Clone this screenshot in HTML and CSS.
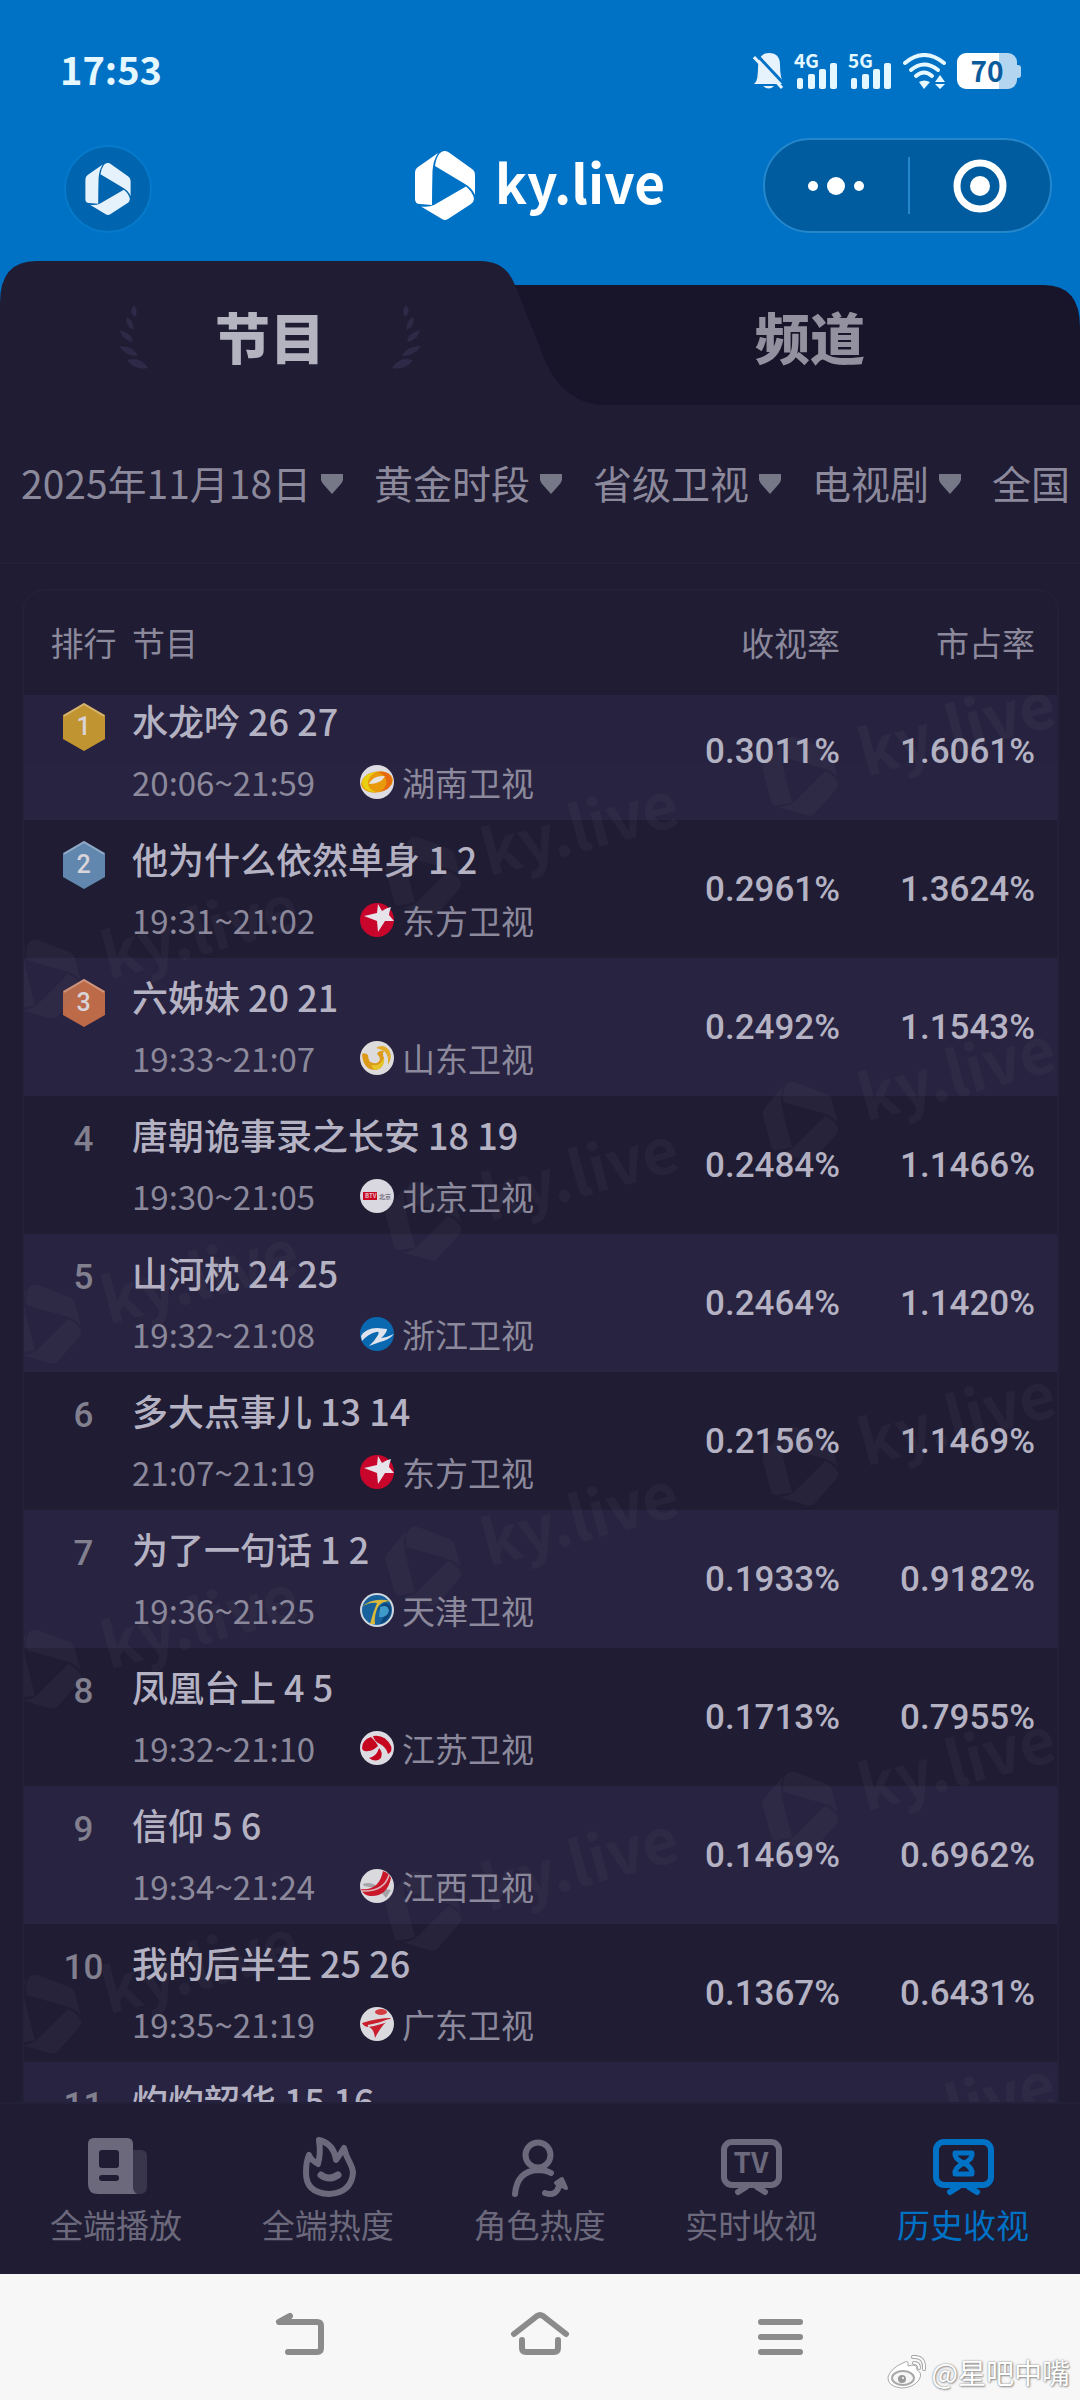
FILE: index.html
```html
<!DOCTYPE html>
<html lang="zh-CN">
<head>
<meta charset="utf-8">
<meta name="viewport" content="width=device-width, initial-scale=1">
<title>ky.live</title>
<link rel="stylesheet" href="styles.css">
</head>
<body>
<svg class="defs" aria-hidden="true">
  <symbol id="logo" viewBox="0 0 60 69">
    <path d="M23 2L3 16Q0 18 0 22V48Q0 53 5 53L17 54Q17 38 17.500 20Q18 10 23 2Z"/>
    <path d="M24.500 2.500Q29 -2 34 1.500L57 18Q60 20 60 24V44Q57 37 50 33L20 15Q21 7 24.500 2.500Z"/>
    <path d="M51 35.500Q58 41 59 48Q58.500 51.500 56 53L33 68Q30 70 27 68L6 55.500Q14 56.500 19 54Z"/>
  </symbol>
  <symbol id="laurel" viewBox="0 0 30 64">
    <path d="M15 0Q9 7 16 12Q20 6 15 0ZM8 12Q5 20 14 25Q16 17 8 12ZM1 25Q3 35 14 37Q13 28 1 25ZM0 41Q6 51 19 51Q15 41 0 41ZM8 55Q16 66 29 63Q22 51 8 55Z"/>
  </symbol>
  <symbol id="arrow" viewBox="0 0 22 20">
    <path d="M0 0H22V6Q21 9 19 11L11 20L3 11Q1 9 0 6Z"/>
  </symbol>
  <symbol id="hex" viewBox="0 0 44 50">
    <path d="M22 1L43 13V37L22 49L1 37V13Z" fill="currentColor"/>
    <path d="M2 14L22 2L42 14" fill="none" stroke="#fff" stroke-opacity=".3" stroke-width="2"/>
  </symbol>
  <symbol id="bars" viewBox="0 0 42 26">
    <rect x="1" y="15" width="6" height="11" rx="2"/><rect x="12" y="11" width="7" height="15" rx="2"/><rect x="23" y="6" width="7" height="20" rx="2"/><rect x="34" y="0" width="7" height="26" rx="2"/>
  </symbol>
  <symbol id="ch-hunan" viewBox="0 0 34 34">
    <circle cx="17" cy="17" r="17" fill="#dddce2"/>
    <ellipse cx="17" cy="17" rx="16" ry="10.500" transform="rotate(-10 17 17)" fill="#e9990c"/>
    <path d="M2 17Q3 27 16 27Q7 24 8 17Q9 10 17 7Q4 8 2 17Z" fill="#e8cf10"/>
    <path d="M17 7Q31 5 32 15Q32 24 20 27Q28 22 26 14Q23 8 17 7Z" fill="#e76a10"/>
    <path d="M9 19Q13 10 25 11Q21 19 9 19Z" fill="#e6e3e0"/>
  </symbol>
  <symbol id="ch-dongfang" viewBox="0 0 34 34">
    <circle cx="17" cy="17" r="17" fill="#c8062c"/>
    <path d="M18 1L22 8Q26 5 31 4Q29 10 29 12L34 18L25 18L18 29L17 18L4 13L17 10Z" fill="#e6e3ea"/>
  </symbol>
  <symbol id="ch-shandong" viewBox="0 0 34 34">
    <circle cx="17" cy="17" r="17" fill="#dddbdc"/>
    <path d="M2 13Q5 11 8 14Q8 21 13 22Q19 23 20 18Q20 15 17 13Q19 9 24 10Q22 13 24 17Q24 29 14 29Q3 28 2 13Z" fill="#dc9a18"/>
    <path d="M16 7Q23 2 29 9Q33 16 28 24Q29 14 24 10Q20 8 16 7Z" fill="#e2ac2a"/>
    <path d="M11 24Q20 26 24 17Q25 28 14 29Z" fill="#e6c62a"/>
  </symbol>
  <symbol id="ch-zhejiang" viewBox="0 0 34 34">
    <circle cx="17" cy="17" r="17" fill="#0a68b0"/>
    <path d="M1 19Q6 11 17 11L27 12Q27 16 21 21Q28 20 34 17Q29 23 20 25L9 29Q14 25 18 18Q20 14 16 15Q8 17 2 24Z" fill="#dfe3ee"/>
  </symbol>
  <symbol id="ch-tianjin" viewBox="0 0 34 34">
    <circle cx="17" cy="17" r="17" fill="#cfd6dd"/>
    <circle cx="17" cy="17" r="15" fill="#17619c"/>
    <path d="M17 17Q25 6 31 13Q32 27 20 31Q26 22 24 15Z" fill="#0d4479"/>
    <path d="M2 14Q12 4 31 8Q21 8 18 14Q14 22 15 31H10Q13 19 17 10Q9 9 2 14Z" fill="#d8b93c"/>
    <path d="M20 14Q28 11 29 18Q27 25 19 24Z" fill="#3e9bc9"/>
  </symbol>
  <symbol id="ch-jiangsu" viewBox="0 0 34 34">
    <circle cx="17" cy="17" r="17" fill="#dddbe2"/>
    <path d="M13 5Q25 3 31 15Q33 20 28 23Q26 16 20 13Q14 10 13 5Z" fill="#c5061e"/>
    <path d="M11 6Q17 12 18 15Q13 20 8 20Q3 21 2 17Q2 9 11 6Z" fill="#c5061e"/>
    <path d="M19 17Q23 21 21 27Q16 32 9 27Q17 25 19 17Z" fill="#c5061e"/>
  </symbol>
  <symbol id="ch-jiangxi" viewBox="0 0 34 34">
    <circle cx="17" cy="17" r="17" fill="#dad9de"/>
    <path d="M3 15Q11 12 20 19L31 21L26 29Q19 18 4 17Z" fill="#a3a3a8"/>
    <path d="M1 20Q19 22 23 2Q29 4 31 9Q27 28 10 27Q3 26 1 20Z" fill="#c9182a"/>
    <path d="M2 22Q24 23 29 6" fill="none" stroke="#dcb3ba" stroke-width="1.500"/>
  </symbol>
  <symbol id="ch-guangdong" viewBox="0 0 34 34">
    <circle cx="17" cy="17" r="17" fill="#dad9de"/>
    <ellipse cx="21" cy="5" rx="6" ry="3" fill="#d43a42"/>
    <path d="M2 16Q18 11 31 11Q22 17 15 31Q14 22 9 20Q4 20 2 16Z" fill="#c91e2c"/>
    <path d="M8 19Q20 17 29 13" fill="none" stroke="#dad9de" stroke-width="2"/>
  </symbol>
</svg>

<header class="top">
  <div class="status">
    <time class="clock">17:53</time>
    <div class="status-icons">
      <svg class="bell" viewBox="0 0 32 36" aria-hidden="true">
        <path d="M2 30Q5 27 5 15Q5 0 16 0Q27 0 27 12Q27 26 31 30Q31 31 29 31H3Q0 31 2 30Z" fill="#e6f3fd"/>
        <path d="M10 33H21Q16 38 10 33Z" fill="#e6f3fd"/>
        <path d="M3 1L32 32" stroke="#0072c6" stroke-width="3"/>
        <path d="M1 4L29 35" stroke="#e6f3fd" stroke-width="3"/>
      </svg>
      <div class="signal"><span>4G</span><svg><use href="#bars"/></svg></div>
      <div class="signal"><span>5G</span><svg><use href="#bars"/></svg></div>
      <svg class="wifi" viewBox="0 0 46 36" aria-hidden="true">
        <g fill="none" stroke="#e6f8ff" stroke-width="4" stroke-linecap="round"><path d="M3 10Q22 -6 42 10"/><path d="M9 17Q22 6 36 17"/><path d="M14 23Q22 16 30 23"/></g>
        <path d="M17 29Q22 26 28 29L22 36ZM33 29L38 22L43 29ZM33 31H43L38 36Z" fill="#e6f8ff"/>
      </svg>
      <div class="battery"><span>70</span></div>
    </div>
  </div>
  <div class="topbar">
    <button class="round" type="button" aria-label="首页"><svg><use href="#logo"/></svg></button>
    <h1 class="brand"><svg aria-hidden="true"><use href="#logo"/></svg><span>ky.live</span></h1>
    <div class="capsule">
      <button type="button" aria-label="更多"><svg viewBox="0 0 56 54"><circle cx="5" cy="27" r="5"/><circle cx="28" cy="27" r="9"/><circle cx="51" cy="27" r="5"/></svg></button>
      <button type="button" aria-label="关闭"><svg viewBox="0 0 56 54"><circle cx="28" cy="27" r="23" fill="none" stroke="#fff" stroke-width="7"/><circle cx="28" cy="27" r="10"/></svg></button>
    </div>
  </div>
  <nav class="tabs">
    <svg class="tabs-shape" viewBox="0 0 1080 144" preserveAspectRatio="none" aria-hidden="true">
      <path d="M480 24H1044Q1080 24 1080 66V144H480Z" fill="#18152a"/>
      <path d="M0 144V42Q0 0 36 0H480Q506 0 515 24L541 89Q560 144 606 144Z" fill="#1f1c33"/>
    </svg>
    <button class="tab active" type="button"><svg><use href="#laurel"/></svg><span>节目</span><svg class="flip"><use href="#laurel"/></svg></button>
    <button class="tab" type="button"><span>频道</span></button>
  </nav>
</header>

<main>
  <form class="filters">
    <label><select aria-label="日期"><option>2025年11月18日</option></select><svg><use href="#arrow"/></svg></label>
    <label><select aria-label="时段"><option>黄金时段</option></select><svg><use href="#arrow"/></svg></label>
    <label><select aria-label="频道"><option>省级卫视</option></select><svg><use href="#arrow"/></svg></label>
    <label><select aria-label="类型"><option>电视剧</option></select><svg><use href="#arrow"/></svg></label>
    <label><select aria-label="地区"><option>全国</option></select><svg><use href="#arrow"/></svg></label>
  </form>

  <section class="card">
    <table>
      <thead>
        <tr><th class="rank">排行</th><th class="show">节目</th><th class="pct">收视率</th><th class="pct share">市占率</th></tr>
      </thead>
      <tbody>
        <tr><td class="rank"><span class="medal gold"><svg><use href="#hex"/></svg><b>1</b></span></td><td class="show"><h2>水龙吟 26 27</h2><p><time>20:06~21:59</time><svg><use href="#ch-hunan"/></svg>湖南卫视</p></td><td class="pct">0.3011%</td><td class="pct share">1.6061%</td></tr>
        <tr><td class="rank"><span class="medal silver"><svg><use href="#hex"/></svg><b>2</b></span></td><td class="show"><h2>他为什么依然单身 1 2</h2><p><time>19:31~21:02</time><svg><use href="#ch-dongfang"/></svg>东方卫视</p></td><td class="pct">0.2961%</td><td class="pct share">1.3624%</td></tr>
        <tr><td class="rank"><span class="medal bronze"><svg><use href="#hex"/></svg><b>3</b></span></td><td class="show"><h2>六姊妹 20 21</h2><p><time>19:33~21:07</time><svg><use href="#ch-shandong"/></svg>山东卫视</p></td><td class="pct">0.2492%</td><td class="pct share">1.1543%</td></tr>
        <tr><td class="rank">4</td><td class="show"><h2>唐朝诡事录之长安 18 19</h2><p><time>19:30~21:05</time><svg viewBox="0 0 34 34"><circle cx="17" cy="17" r="17" fill="#d9d7df"/><rect x="3" y="13" width="14" height="8" fill="#ca0a24"/><text x="5" y="19" font-size="6" font-weight="700" fill="#e8b9c2">BTV</text><text x="19" y="20" font-size="6" font-weight="700" fill="#77757f">北京</text></svg>北京卫视</p></td><td class="pct">0.2484%</td><td class="pct share">1.1466%</td></tr>
        <tr><td class="rank">5</td><td class="show"><h2>山河枕 24 25</h2><p><time>19:32~21:08</time><svg><use href="#ch-zhejiang"/></svg>浙江卫视</p></td><td class="pct">0.2464%</td><td class="pct share">1.1420%</td></tr>
        <tr><td class="rank">6</td><td class="show"><h2>多大点事儿 13 14</h2><p><time>21:07~21:19</time><svg><use href="#ch-dongfang"/></svg>东方卫视</p></td><td class="pct">0.2156%</td><td class="pct share">1.1469%</td></tr>
        <tr><td class="rank">7</td><td class="show"><h2>为了一句话 1 2</h2><p><time>19:36~21:25</time><svg><use href="#ch-tianjin"/></svg>天津卫视</p></td><td class="pct">0.1933%</td><td class="pct share">0.9182%</td></tr>
        <tr><td class="rank">8</td><td class="show"><h2>凤凰台上 4 5</h2><p><time>19:32~21:10</time><svg><use href="#ch-jiangsu"/></svg>江苏卫视</p></td><td class="pct">0.1713%</td><td class="pct share">0.7955%</td></tr>
        <tr><td class="rank">9</td><td class="show"><h2>信仰 5 6</h2><p><time>19:34~21:24</time><svg><use href="#ch-jiangxi"/></svg>江西卫视</p></td><td class="pct">0.1469%</td><td class="pct share">0.6962%</td></tr>
        <tr><td class="rank">10</td><td class="show"><h2>我的后半生 25 26</h2><p><time>19:35~21:19</time><svg><use href="#ch-guangdong"/></svg>广东卫视</p></td><td class="pct">0.1367%</td><td class="pct share">0.6431%</td></tr>
        <tr><td class="rank">11</td><td class="show"><h2>灼灼韶华 15 16</h2></td><td class="pct"></td><td class="pct share"></td></tr>
      </tbody>
    </table>
    <svg class="watermarks" aria-hidden="true">
      <defs>
        <g id="mark"><use href="#logo" x="-32" y="-34" width="60" height="69"/><text x="51" y="15">ky.live</text></g>
        <pattern id="marks" width="1035" height="345" patternUnits="userSpaceOnUse">
          <use href="#mark" transform="translate(779 80) rotate(-15) scale(1.18)"/>
          <use href="#mark" transform="translate(779 425) rotate(-15) scale(1.18)"/>
          <use href="#mark" transform="translate(402 180) rotate(-15) scale(1.18)"/>
          <use href="#mark" transform="translate(22 283) rotate(-15) scale(1.18)"/>
        </pattern>
      </defs>
      <rect width="100%" height="100%" fill="url(#marks)"/>
    </svg>
  </section>
</main>

<nav class="bottom">
  <a href="#play"><svg viewBox="0 0 66 66"><path d="M50 18H58Q64 18 64 24V55Q64 62 57 62H50Z" fill="#39364b"/><path fill-rule="evenodd" d="M11 6H44Q50 6 50 12V55Q50 60 54 62H15Q5 62 5 52V12Q5 6 11 6ZM19 18Q16 18 16 21V33Q16 36 19 36H33Q36 36 36 33V21Q36 18 33 18ZM19 43Q16 43 16 46T19 49H33Q36 49 36 46T33 43Z" fill="currentColor"/></svg>全端播放</a>
  <a href="#heat"><svg class="line" viewBox="0 0 66 66"><path d="M24 8Q39 12 41 28Q44 24 49 16Q51 24 55 31Q58 37 58 41Q56 61 34 62Q11 61 11 41Q11 29 14 23Q16 28 23 32Q26 22 24 8Z"/><path d="M26 43Q34 49 43 43" stroke-width="7"/></svg>全端热度</a>
  <a href="#role"><svg class="line" viewBox="0 0 66 66"><circle cx="32" cy="23" r="12.500"/><path d="M9 62Q11 39 32 38Q40 38 45 41M39 61Q50 65 53 54"/><path d="M56 47L50 51L60 56Z" fill="currentColor" stroke-width="4"/></svg>角色热度</a>
  <a href="#live"><svg class="line" viewBox="0 0 66 66"><rect x="6" y="10" width="55" height="43" rx="8"/><path d="M28 55L20 60M39 55L47 60"/><text class="tv" x="33" y="41" text-anchor="middle">TV</text></svg>实时收视</a>
  <a href="#history" class="current"><svg class="line" viewBox="0 0 66 66"><rect x="6" y="10" width="55" height="43" rx="8"/><path d="M28 55L20 60M39 55L47 60"/><path d="M25 21H42Q43 27 34 31Q24 36 25 42H42Q43 36 34 31Q24 27 25 21Z" stroke-width="5"/></svg>历史收视</a>
</nav>

<footer class="system">
  <button type="button" aria-label="返回"><svg viewBox="0 0 60 50"><path d="M20 9L9 15H47Q51 15 51 19V41Q51 45 47 45H18"/></svg></button>
  <button type="button" aria-label="主屏幕"><svg viewBox="0 0 60 50"><path d="M4 27L27 9Q30 7 33 9L56 27M12 33V41Q12 45 16 45H44Q48 45 48 41V33"/></svg></button>
  <button type="button" aria-label="最近任务"><svg viewBox="0 0 60 50"><path d="M11 15H50M11 30H50M11 45H50"/></svg></button>
  <div class="credit"><svg viewBox="0 0 40 34" aria-hidden="true"><path d="M16 8Q22 4 21 11Q30 8 30 15Q36 18 32 25Q26 33 14 33Q0 31 1 22Q4 13 16 8Z" fill="#fff" stroke="#a9a9a9"/><ellipse cx="16" cy="23" rx="11" ry="7" fill="#f7f7f7" stroke="#a9a9a9" stroke-width="2"/><circle cx="15" cy="24" r="4" fill="#999"/><circle cx="16" cy="23" r="1" fill="#fff"/><path d="M26 2Q38 1 37 14M27 8Q32 8 32 13" fill="none" stroke="#a6a6a6" stroke-width="4" stroke-linecap="round"/><path d="M26 2Q38 1 37 14M27 8Q32 8 32 13" fill="none" stroke="#fff" stroke-width="2" stroke-linecap="round"/></svg>@星吧中嘴</div>
</footer>
</body>
</html>
```
FILE: styles.css
```css
* { box-sizing: border-box; }

body {
  margin: 0;
  height: 100vh;
  display: flex;
  flex-direction: column;
  background: #1f1c33;
  color: #b4b2c3;
  font-family: "Noto Sans CJK SC", "Noto Sans", sans-serif;
  overflow: hidden;
}

button, select {
  border: 0;
  padding: 0;
  margin: 0;
  background: none;
  color: inherit;
  font: inherit;
}

h1, h2, p { margin: 0; }
.defs { position: absolute; width: 0; height: 0; }

/* Header */
.top { background: #0072c6; flex: none; }

.status {
  height: 138px;
  padding: 4px 63px 0 60px;
  display: flex;
  align-items: center;
  justify-content: space-between;
  color: #e6f8ff;
}
.clock { font-size: 38px; line-height: 48px; padding-bottom: 4px; font-weight: 700; }
.status-icons { display: flex; align-items: center; gap: 9px; height: 36px; }
.bell { width: 32px; height: 36px; }
.signal { width: 45px; height: 36px; position: relative; }
.signal span { position: absolute; left: 0; top: 0; font-size: 19px; line-height: 14px; font-weight: 700; }
.signal svg { position: absolute; left: 2px; bottom: 0; width: 42px; height: 26px; fill: #e6f8ff; }
.wifi { width: 46px; height: 36px; }
.battery {
  width: 60px;
  height: 36px;
  border-radius: 9px;
  background: linear-gradient(to right, #fff 70%, #b3d5ef 70%);
  color: #0a5c9c;
  font-size: 28px;
  line-height: 34px;
  font-weight: 700;
  text-align: center;
  position: relative;
}
.battery::after {
  content: "";
  position: absolute;
  right: -4px;
  top: 12px;
  width: 4px;
  height: 13px;
  border-radius: 0 3px 3px 0;
  background: #b3d5ef;
}

.topbar {
  display: grid;
  grid-template-columns: 1fr auto 1fr;
  align-items: center;
  padding: 0 28px 28px 64px;
  column-gap: 24px;
}
.round {
  align-self: end;
  width: 88px;
  height: 88px;
  border-radius: 50%;
  border: 2px solid #067acb;
  background: #0064ae;
  display: grid;
  place-items: center;
}
.round svg { width: 46px; height: 52px; fill: #e6f2fb; }
.brand {
  display: flex;
  align-items: center;
  gap: 20px;
  padding-right: 36px;
  color: #fff;
  font-size: 53px;
  line-height: 64px;
  font-weight: 700;
}
.brand span { padding-bottom: 10px; }
.brand svg { width: 60px; height: 69px; fill: #fff; }
.capsule {
  justify-self: end;
  width: 289px;
  height: 95px;
  border: 2px solid #2487cc;
  border-radius: 48px;
  background: #005c9e;
  display: grid;
  grid-template-columns: 1fr 1fr;
  align-items: center;
}
.capsule button { height: 57px; display: grid; place-items: center; }
.capsule button + button { border-left: 2px solid #2487cc; }
.capsule svg { width: 56px; height: 54px; fill: #fff; }

.tabs {
  position: relative;
  height: 144px;
  display: grid;
  grid-template-columns: 1fr 1fr;
}
.tabs-shape { position: absolute; inset: 0; width: 100%; height: 100%; }
.tab {
  position: relative;
  display: flex;
  align-items: center;
  justify-content: center;
  gap: 66px;
  padding-top: 8px;
  color: #93919f;
  font-size: 55px;
  line-height: 72px;
  font-weight: 900;
}
.tab span { padding-bottom: 4px; }
.tab.active { color: #b4b3c0; }
.tab svg { width: 30px; height: 64px; fill: #2d2946; }
.tab .flip { transform: scaleX(-1); }

/* Filters */
main { flex: 1; min-height: 0; display: flex; flex-direction: column; }
.filters {
  flex: none;
  height: 159px;
  padding-left: 21px;
  border-bottom: 2px solid #232039;
  display: flex;
  align-items: center;
  gap: 31px;
  overflow: hidden;
  color: #8b899b;
  font-size: 39px;
}
.filters label { display: flex; align-items: center; gap: 9px; flex: none; }
.filters select { appearance: none; padding-bottom: 4px; }
.filters svg { width: 22px; height: 20px; fill: #777887; }

/* Ranking */
.card {
  flex: 1;
  min-height: 0;
  margin: 25px 21px 0 22px;
  border: 2px solid #232039;
  border-bottom: 0;
  border-radius: 22px 22px 0 0;
  overflow: hidden;
  position: relative;
}
table { width: 100%; border-collapse: collapse; table-layout: fixed; }
th {
  height: 104px;
  padding: 0 0 3px;
  color: #8b899b;
  font-size: 33px;
  line-height: 48px;
  font-weight: 400;
  vertical-align: middle;
}
/* --cut is how far a row is scrolled under the header */
tbody tr { --cut: 0px; height: calc(138px - var(--cut)); }
tbody tr:first-child { --cut: 13px; }
tbody tr:nth-child(odd) { background: #282340; }
td { vertical-align: top; padding: 0; }
.rank { width: 108px; padding-left: 26px; padding-right: 15px; text-align: center; white-space: nowrap; }
.show { text-align: left; }
.pct { width: 240px; text-align: right; }
.share { width: 217px; padding-right: 22px; }

td.rank {
  padding-top: calc(20px - var(--cut));
  color: #82808f;
  font-family: Roboto, sans-serif;
  font-size: 35px;
  line-height: 48px;
  font-weight: 500;
}
td.pct {
  padding-top: calc(46px - var(--cut));
  font-family: Roboto, sans-serif;
  font-size: 35px;
  line-height: 48px;
  font-weight: 500;
}
td.show { padding-top: calc(14px - var(--cut)); }
.show h2 { font-size: 36px; line-height: 48px; font-weight: 500; white-space: nowrap; }
.show p {
  margin-top: 14px;
  height: 48px;
  display: flex;
  align-items: center;
  color: #8b899b;
  font-size: 33px;
  line-height: 48px;
  white-space: nowrap;
}
.show time { width: 228px; }
.show svg { width: 34px; height: 34px; margin-right: 8px; }

.medal { display: grid; place-items: center; height: 50px; }
.medal > * { grid-area: 1 / 1; }
.medal svg { width: 44px; height: 50px; }
.medal b { color: #d8d4da; font-size: 25px; line-height: 48px; font-weight: 500; }
.gold { color: #c29432; }
.silver { color: #6287ae; }
.bronze { color: #bd6a48; }

.watermarks {
  position: absolute;
  left: 0;
  top: 104px;
  width: 100%;
  height: calc(100% - 104px);
  fill: #7c7c8c;
  opacity: .08;
  font-size: 53px;
  font-weight: 700;
  pointer-events: none;
}

/* Bottom navigation */
.bottom {
  flex: none;
  height: 172px;
  padding: 28px 11px 0 10px;
  display: grid;
  grid-template-columns: repeat(5, 1fr);
  background: #1f1c33;
  border-top: 2px solid #232039;
}
.bottom a {
  display: flex;
  flex-direction: column;
  align-items: center;
  gap: 2px;
  color: #6b697b;
  font-size: 33px;
  line-height: 48px;
  text-decoration: none;
}
.bottom .current { color: #0072c6; }
.bottom svg { width: 66px; height: 66px; }
.line { fill: none; stroke: currentColor; stroke-width: 6; stroke-linecap: round; stroke-linejoin: round; }
.tv { fill: currentColor; stroke: none; font: 700 28px "Noto Sans CJK SC", sans-serif; }

.system {
  flex: none;
  height: 126px;
  position: relative;
  display: flex;
  justify-content: center;
  background: #f7f7f7;
}
.system button { width: 240px; padding-top: 33px; display: flex; justify-content: center; }
.system button svg { width: 60px; height: 50px; fill: none; stroke: #8b8b8b; stroke-width: 6; stroke-linecap: round; stroke-linejoin: round; }
.credit {
  position: absolute;
  right: 10px;
  bottom: 7px;
  display: flex;
  align-items: center;
  gap: 5px;
  color: #fff;
  font-size: 28px;
  line-height: 42px;
  text-shadow: 0 0 2px #777, 1px 1px 2px #999;
}
.credit svg { width: 40px; height: 34px; }
```
